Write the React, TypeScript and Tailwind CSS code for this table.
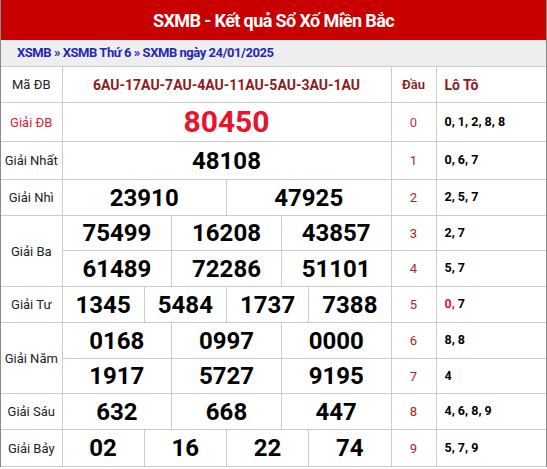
import { FC, ReactNode } from 'react'

interface IRow {
  label?: string
  labelSpan?: number
  labelRed?: boolean
  nums: string[]
  head: string
  loto: ReactNode
  h: string
}

const rows: IRow[] = [
  { label: 'Giải ĐB', labelRed: true, nums: ['80450'], head: '0', loto: '0, 1, 2, 8, 8', h: 'h-[39px]' },
  { label: 'Giải Nhất', nums: ['48108'], head: '1', loto: '0, 6, 7', h: 'h-[38px]' },
  { label: 'Giải Nhì', nums: ['23910', '47925'], head: '2', loto: '2, 5, 7', h: 'h-[36px]' },
  { label: 'Giải Ba', labelSpan: 2, nums: ['75499', '16208', '43857'], head: '3', loto: '2, 7', h: 'h-[35px]' },
  { nums: ['61489', '72286', '51101'], head: '4', loto: '5, 7', h: 'h-[36px]' },
  {
    label: 'Giải Tư',
    nums: ['1345', '5484', '1737', '7388'],
    head: '5',
    loto: (
      <>
        <span className="text-[#e8142c]">0,</span> 7
      </>
    ),
    h: 'h-[36px]'
  },
  { label: 'Giải Năm', labelSpan: 2, nums: ['0168', '0997', '0000'], head: '6', loto: '8, 8', h: 'h-[36px]' },
  { nums: ['1917', '5727', '9195'], head: '7', loto: '4', h: 'h-[35px]' },
  { label: 'Giải Sáu', nums: ['632', '668', '447'], head: '8', loto: '4, 6, 8, 9', h: 'h-[36px]' },
  { label: 'Giải Bảy', nums: ['02', '16', '22', '74'], head: '9', loto: '5, 7, 9', h: 'h-[37px]' }
]

const NumCells: FC<{ nums: string[]; special?: boolean }> = ({ nums, special }) => (
  <div className="flex h-full">
    {nums.map((n, i) => (
      <div
        key={i}
        className={`flex flex-1 items-center justify-center font-bold leading-none ${
          i > 0 ? 'border-l border-[#cccccc]' : ''
        } ${special ? 'text-[30px] text-[#e8142c]' : 'text-[24px] text-black'}`}
      >
        {n}
      </div>
    ))}
  </div>
)

const App: FC = () => {
  return (
    <div className="w-[547px] border-x border-[#8a8a8a] bg-white font-['Roboto',sans-serif]">
      <div className="flex h-[40px] items-center justify-center bg-[#c80000] text-[18px] font-bold tracking-[-0.6px] text-white">
        SXMB - Kết quả Sổ Xố Miền Bắc
      </div>
      <div className="flex h-[26px] items-center bg-[#eeeef0] px-4 text-[13px] font-bold tracking-[-0.45px] text-[#2626b4]">
        XSMB » XSMB Thứ 6 » SXMB ngày 24/01/2025
      </div>
      <table className="w-full table-fixed border-collapse leading-none">
        <colgroup>
          <col className="w-[61px]" />
          <col className="w-[329px]" />
          <col className="w-[45px]" />
          <col />
        </colgroup>
        <tbody>
          <tr className="h-[36px]">
            <td className="border border-l-0 border-[#cccccc] text-center text-[13px] text-[#222]">Mã ĐB</td>
            <td className="border border-[#cccccc] text-center text-[14px] font-bold text-[#8e1b1b]">
              6AU-17AU-7AU-4AU-11AU-5AU-3AU-1AU
            </td>
            <td className="border border-[#cccccc] text-center text-[13px] font-semibold text-[#8e1b1b]">Đầu</td>
            <td className="border border-r-0 border-[#cccccc] pl-2 text-[14px] font-bold text-[#8e1b1b]">Lô Tô</td>
          </tr>
          {rows.map((r, i) => (
            <tr key={i} className={r.h}>
              {r.label && (
                <td
                  rowSpan={r.labelSpan ?? 1}
                  className={`border border-l-0 border-[#cccccc] text-center text-[13px] ${
                    r.labelRed ? 'text-[#dc1a3e]' : 'text-[#222]'
                  }`}
                >
                  {r.label}
                </td>
              )}
              <td className="h-px border border-[#cccccc] p-0">
                <NumCells nums={r.nums} special={i === 0} />
              </td>
              <td
                className={`border border-[#cccccc] text-center text-[13px] ${
                  i === 0 ? 'text-[#dc1a5a]' : 'text-[#a3262a]'
                }`}
              >
                {r.head}
              </td>
              <td className="border border-r-0 border-[#cccccc] pl-2 text-[12.5px] font-bold text-black">{r.loto}</td>
            </tr>
          ))}
        </tbody>
      </table>
    </div>
  )
}

export default App
